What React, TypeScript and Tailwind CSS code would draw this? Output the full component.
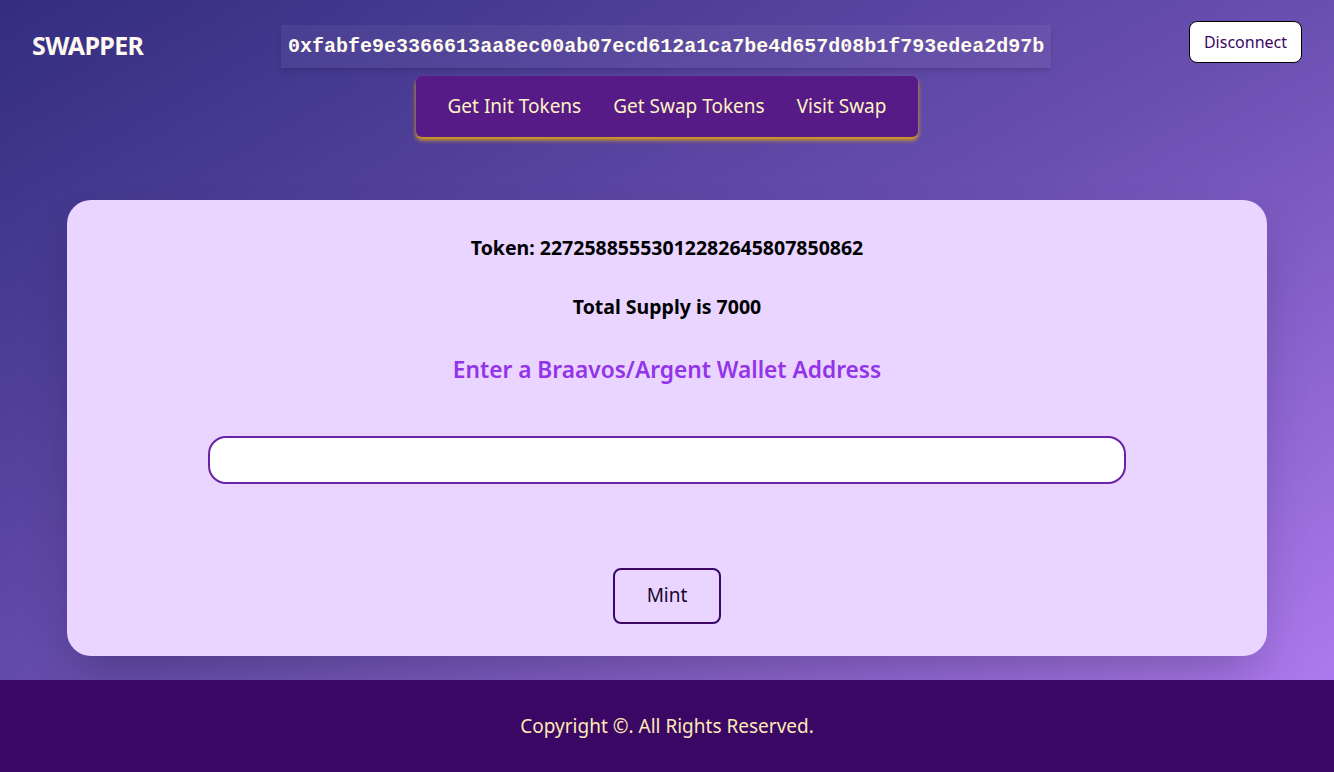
import React from 'react';

const App: React.FC = () => {
  return (
    <div
      className="min-h-screen flex flex-col bg-gradient-to-br from-[#332d80] via-[#6a4fb0] to-[#b77ff7]"
      style={{ fontFamily: '"Noto Sans", "Open Sans", sans-serif' }}
    >
      {/* Header */}
      <header className="relative h-[140px]">
        <div className="flex items-start justify-between px-8 pt-[21px]">
          <h1 className="text-[25px] font-bold text-[#fff8ee] mt-[6px] tracking-tight">SWAPPER</h1>
          <div className="px-[7px] h-[43px] mt-[4px] flex items-center bg-white/5 shadow-md">
            <span
              className="text-[20px] font-bold text-[#fffbef]"
              style={{ fontFamily: '"Liberation Mono", monospace' }}
            >
              0xfabfe9e3366613aa8ec00ab07ecd612a1ca7be4d657d08b1f793edea2d97b
            </span>
          </div>
          <button className="h-[42px] w-[113px] bg-white border border-black rounded-lg text-[16px] text-[#3b0764]">
            Disconnect
          </button>
        </div>
        <div className="flex justify-center mt-[8px]">
          <nav className="flex gap-8 items-center h-[61px] px-8 rounded-md bg-[#561b86] shadow-[0_3px_4px_rgba(234,170,8,0.95)] text-[19px] text-[#fdf3c4]">
            <a>Get Init Tokens</a>
            <a>Get Swap Tokens</a>
            <a>Visit Swap</a>
          </nav>
        </div>
      </header>

      {/* Main card */}
      <main className="flex-1 px-[67px] pt-[60px] pb-[24px]">
        <div className="bg-[#e9d5ff] rounded-3xl shadow-2xl h-[456px] flex flex-col items-center pt-[33px]">
          <p className="text-[19.5px] font-bold text-black">Token: 22725885553012282645807850862</p>
          <p className="text-[19.5px] font-bold text-black mt-[30px]">Total Supply is 7000</p>
          <h2 className="text-[22.7px] font-semibold text-[#9333ea] mt-[31px]">Enter a Braavos/Argent Wallet Address</h2>
          <input
            type="text"
            className="mt-[49px] w-[918px] h-[48px] bg-white border-2 border-[#6b21a8] rounded-[18px] px-4 outline-none"
          />
          <button className="mt-[84px] w-[108px] h-[56px] border-2 border-[#3b0764] rounded-lg text-[19px] text-[#1a0530]">
            Mint
          </button>
        </div>
      </main>

      {/* Footer */}
      <footer className="h-[92px] bg-[#3b0764] flex items-center justify-center">
        <p className="text-[19px] text-[#fde9b8]">Copyright ©. All Rights Reserved.</p>
      </footer>
    </div>
  );
};

export default App;
